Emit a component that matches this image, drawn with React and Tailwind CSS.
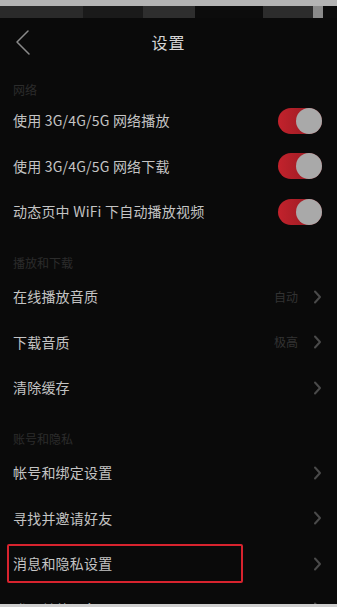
import { Fragment } from 'react';

const sections = [
  {
    title: '网络',
    first: true,
    rows: [
      { label: '使用 3G/4G/5G 网络播放', toggle: true },
      { label: '使用 3G/4G/5G 网络下载', toggle: true },
      { label: '动态页中 WiFi 下自动播放视频', toggle: true },
    ],
  },
  {
    title: '播放和下载',
    rows: [
      { label: '在线播放音质', value: '自动' },
      { label: '下载音质', value: '极高' },
      { label: '清除缓存' },
    ],
  },
  {
    title: '账号和隐私',
    rows: [
      { label: '帐号和绑定设置' },
      { label: '寻找并邀请好友' },
      { label: '消息和隐私设置', marked: true },
      { label: '登录其他设备' },
    ],
  },
];

function Chevron() {
  return (
    <svg width="9" height="14" viewBox="0 0 9 14" fill="none">
      <polyline points="2,1.5 7,7 2,12.5" stroke="#4a4a4a" strokeWidth="2" strokeLinecap="round" strokeLinejoin="round" />
    </svg>
  );
}

function Toggle() {
  return (
    <div className="relative w-[44px] h-[26px] rounded-full bg-gradient-to-r from-[#c3222c] to-[#8d1a21]">
      <div className="absolute right-0 top-0 w-[26px] h-[26px] rounded-full bg-[#a9a9a9]" />
    </div>
  );
}

function Row({ row }) {
  return (
    <div className="relative h-[45.5px] flex items-center justify-between pl-[13px] pr-[15px]">
      <span className="text-[14px] text-[#c4c4c4] tracking-[0.2px]">{row.label}</span>
      {row.toggle ? (
        <Toggle />
      ) : (
        <div className="flex items-center gap-[15px]">
          {row.value && <span className="text-[12px] text-[#333333]">{row.value}</span>}
          <Chevron />
        </div>
      )}
      {/* hand-drawn highlight box */}
      {row.marked && (
        <div className="absolute left-[7px] top-[3px] w-[236px] h-[39px] border-2 border-[#d8232e] rounded-[2px]" />
      )}
    </div>
  );
}

export default function App() {
  return (
    <div
      className="relative w-[337px] h-[607px] overflow-hidden bg-[#0a0a0a]"
      style={{ fontFamily: '"Noto Sans CJK SC", "Noto Sans", sans-serif' }}
    >
      {/* blurred status bar */}
      <div className="h-[6px] bg-[#b4b4b4]" />
      <div className="h-[12px] flex bg-[#0c0c0c]">
        <div className="w-[83px] bg-[#2a2a2a]" />
        <div className="w-[60px] bg-[#1a1a1a]" />
        <div className="w-[52px] bg-[#2e2e2e]" />
        <div className="w-[68px]" />
        <div className="w-[50px] bg-[#2c2c2c]" />
        <div className="w-[10px] bg-[#8a8a8a]" />
      </div>

      {/* header */}
      <div className="relative h-[48px] flex items-center justify-center">
        <svg className="absolute left-[14px] top-[11px]" width="18" height="26" viewBox="0 0 18 26" fill="none">
          <polyline points="14,2 3,13 15,25" stroke="#8a8a8a" strokeWidth="1.5" strokeLinecap="round" strokeLinejoin="round" />
        </svg>
        <span className="text-[16px] text-[#d6d6d6] tracking-[1px]">设置</span>
      </div>

      {sections.map((s) => (
        <Fragment key={s.title}>
          <div className={s.first ? 'h-[32px] pt-[10px] pl-[13px]' : 'h-[39.5px] pt-[14px] pl-[13px]'}>
            <span className="text-[12px] leading-[16px] text-[#2c2c2c]">{s.title}</span>
          </div>
          {s.rows.map((r) => (
            <Row key={r.label} row={r} />
          ))}
        </Fragment>
      ))}

      <div className="absolute bottom-0 left-0 right-0 h-[3px] bg-[#cfcfcf]" />
    </div>
  );
}
